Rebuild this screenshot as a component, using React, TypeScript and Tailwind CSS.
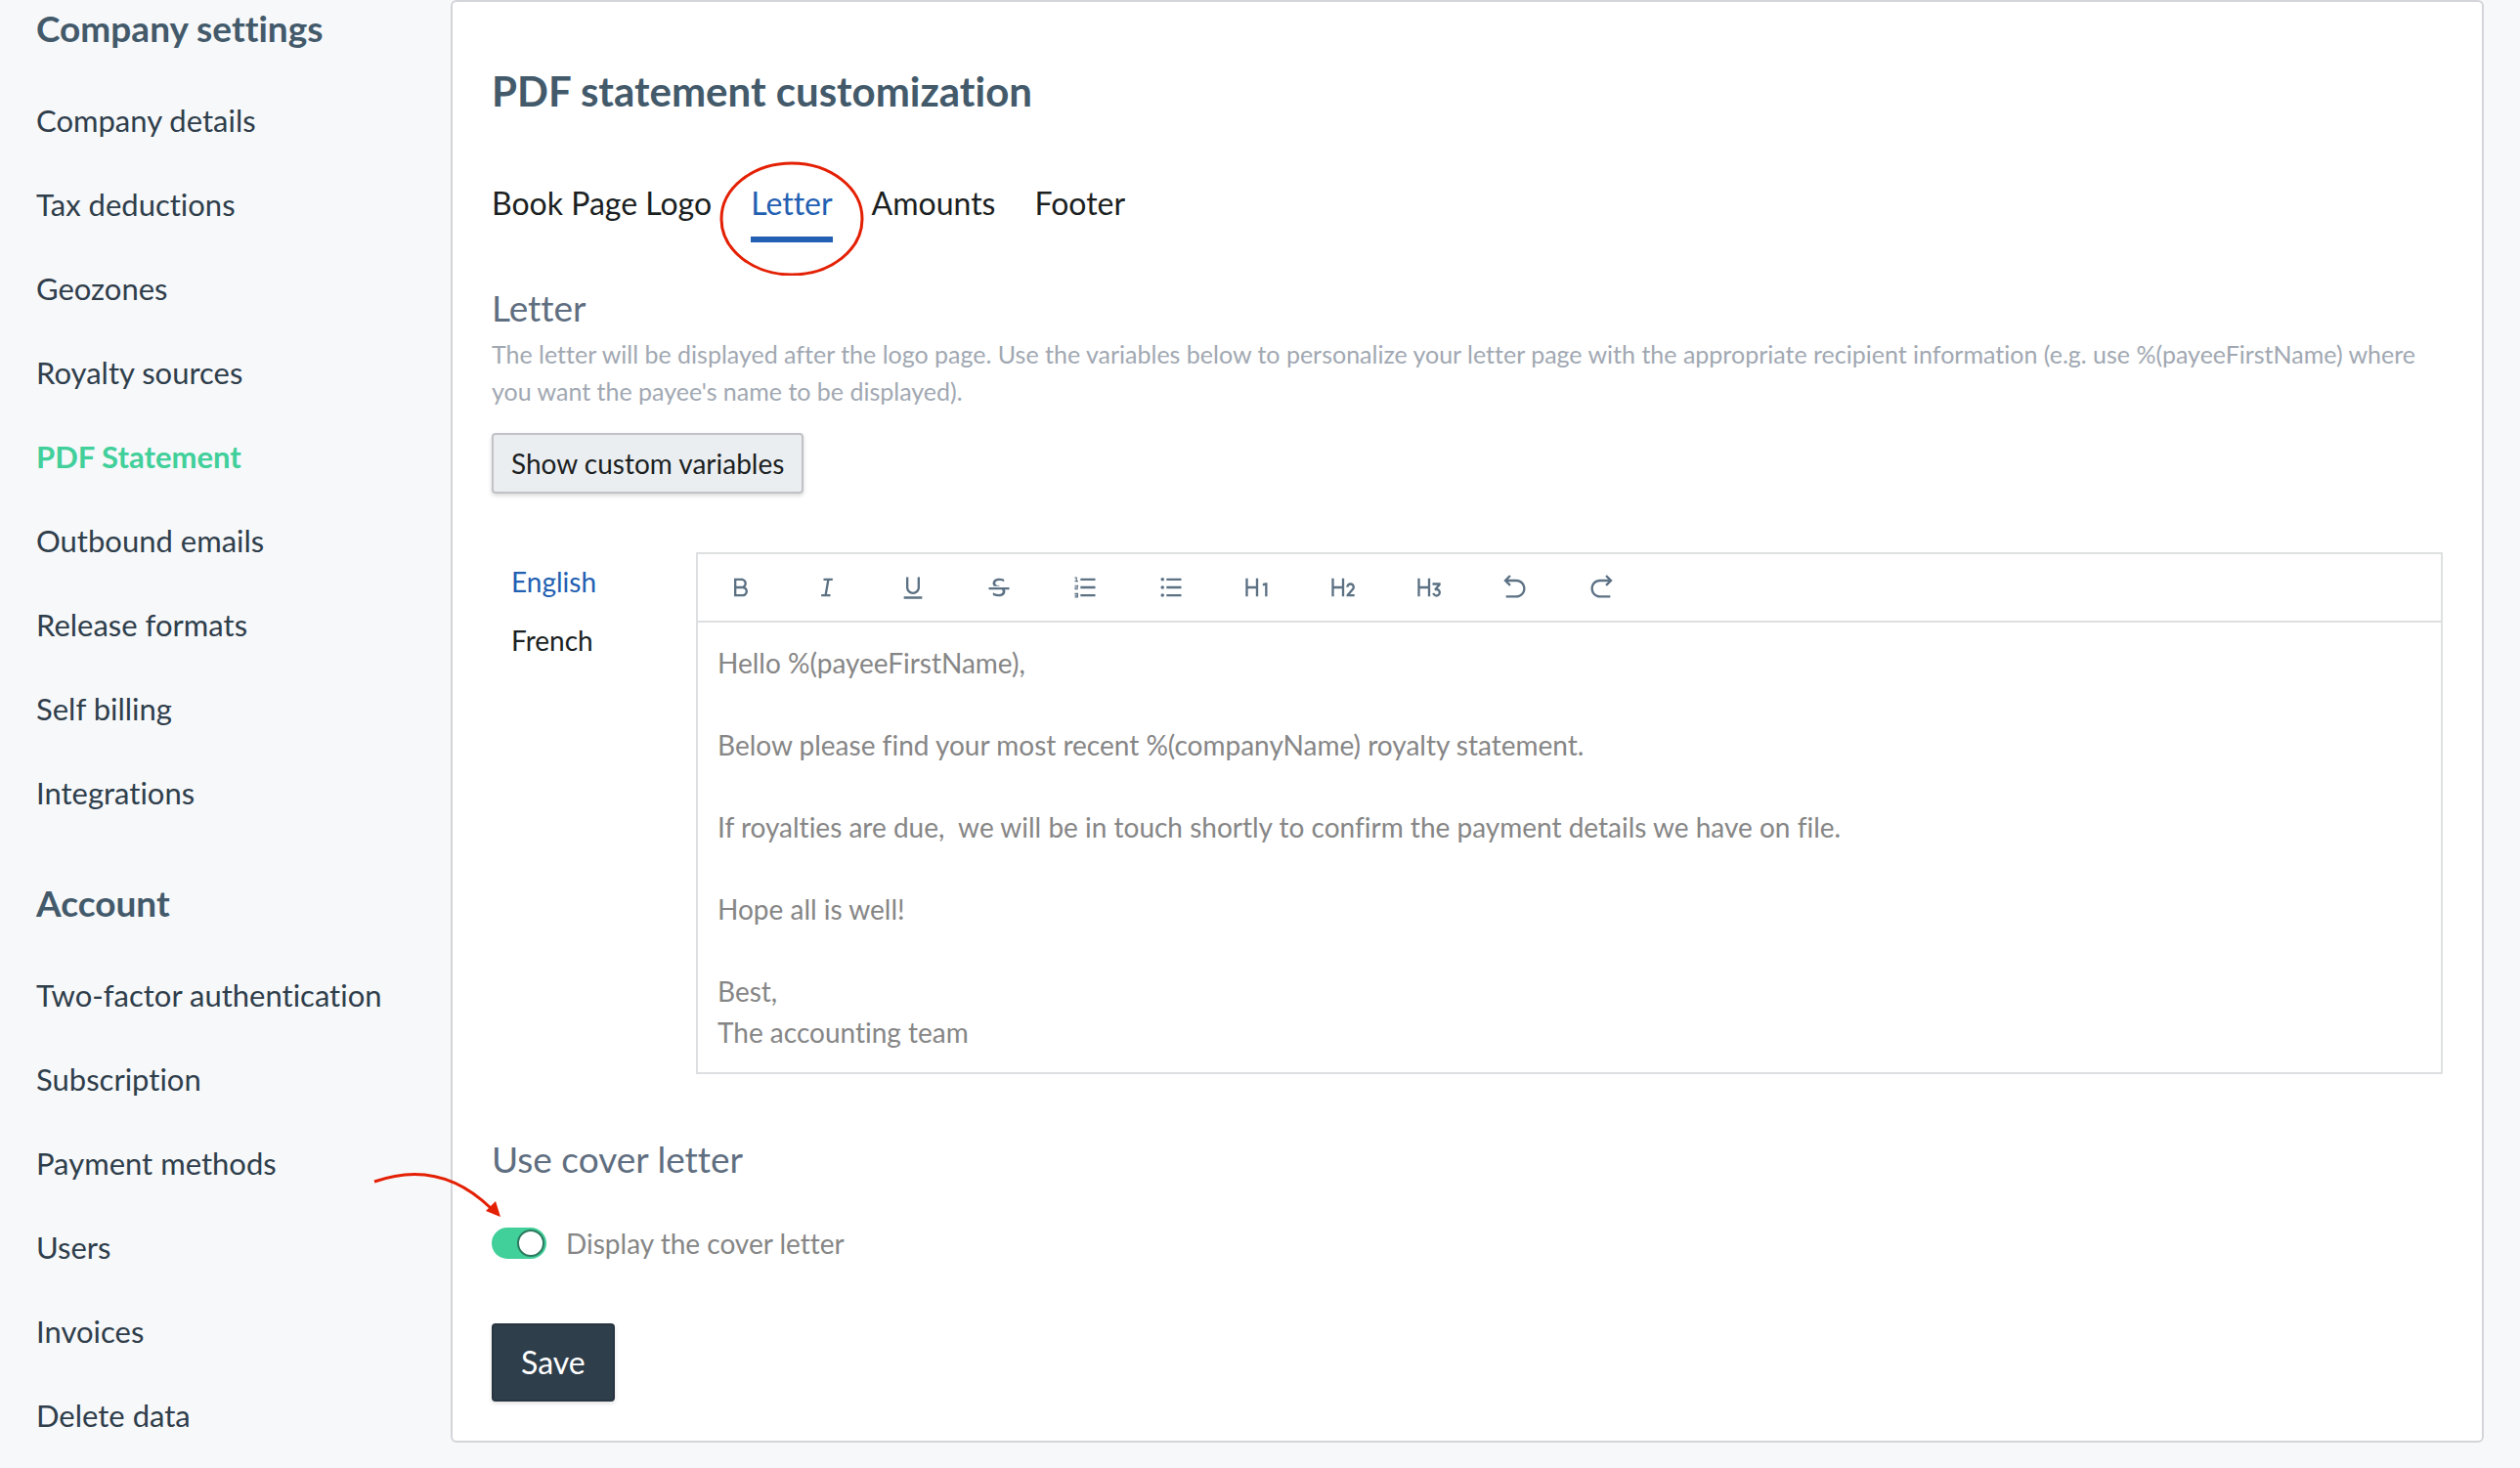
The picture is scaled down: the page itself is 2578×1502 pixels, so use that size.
import { useState } from "react";
import type { IconType } from "react-icons";
import {
  RiArrowGoBackLine,
  RiArrowGoForwardLine,
  RiBold,
  RiH1,
  RiH2,
  RiH3,
  RiItalic,
  RiListOrdered,
  RiListUnordered,
  RiStrikethrough,
  RiUnderline,
} from "react-icons/ri";

const menus = [
  {
    title: "Company settings",
    items: [
      { label: "Company details", path: "#company-details" },
      { label: "Tax deductions", path: "#tax-deductions" },
      { label: "Geozones", path: "#geozones" },
      { label: "Royalty sources", path: "#royalty-sources" },
      { label: "PDF Statement", path: "#pdf-statement", active: true },
      { label: "Outbound emails", path: "#outbound-emails" },
      { label: "Release formats", path: "#release-formats" },
      { label: "Self billing", path: "#self-billing" },
      { label: "Integrations", path: "#integrations" },
    ],
  },
  {
    title: "Account",
    items: [
      { label: "Two-factor authentication", path: "#two-factor" },
      { label: "Subscription", path: "#subscription" },
      { label: "Payment methods", path: "#payment-methods" },
      { label: "Users", path: "#users" },
      { label: "Invoices", path: "#invoices" },
      { label: "Delete data", path: "#delete-data" },
    ],
  },
];

const tabs = ["Book Page Logo", "Letter", "Amounts", "Footer"];

const languages = ["English", "French"];

const tools: { label: string; Icon: IconType }[] = [
  { label: "Bold", Icon: RiBold },
  { label: "Italic", Icon: RiItalic },
  { label: "Underline", Icon: RiUnderline },
  { label: "Strikethrough", Icon: RiStrikethrough },
  { label: "Ordered list", Icon: RiListOrdered },
  { label: "Bullet list", Icon: RiListUnordered },
  { label: "Heading 1", Icon: RiH1 },
  { label: "Heading 2", Icon: RiH2 },
  { label: "Heading 3", Icon: RiH3 },
  { label: "Undo", Icon: RiArrowGoBackLine },
  { label: "Redo", Icon: RiArrowGoForwardLine },
];

const letter = `Hello %(payeeFirstName),

Below please find your most recent %(companyName) royalty statement.

If royalties are due,  we will be in touch shortly to confirm the payment details we have on file.

Hope all is well!

Best,
The accounting team`;

const Sidebar = () => (
  <nav className="flex flex-col gap-12 pl-[37px] pt-[7px]">
    {menus.map((menu) => (
      <section key={menu.title}>
        <h2 className="mb-[29px] text-[37px] leading-[44px] font-bold text-[#435a6b]">
          {menu.title}
        </h2>
        <ul>
          {menu.items.map((item) => (
            <li key={item.path} className="text-[31px] leading-[86px]">
              <a
                href={item.path}
                className={item.active ? "font-bold text-[#41cf9a]" : "text-[#2f3e4b]"}
              >
                {item.label}
              </a>
            </li>
          ))}
        </ul>
      </section>
    ))}
  </nav>
);

const Tabs = () => {
  const [current, setCurrent] = useState("Letter");

  return (
    <div role="tablist" className="mt-16 flex items-start gap-10">
      {tabs.map((tab) => (
        <div key={tab} className="relative">
          <button
            type="button"
            role="tab"
            aria-selected={tab === current}
            onClick={() => setCurrent(tab)}
            className={
              tab === current
                ? "block cursor-pointer border-b-[6px] border-[#235fb2] pb-[10px] text-[32px] leading-[48px] text-[#235fb2]"
                : "block cursor-pointer border-b-[6px] border-transparent pb-[10px] text-[32px] leading-[48px] text-[#1b1f22]"
            }
          >
            {tab}
          </button>
          {/* hand-drawn style marker round the letter tab */}
          {tab === "Letter" && (
            <svg
              viewBox="0 0 148 118"
              className="pointer-events-none absolute -left-8 -top-5 h-[118px] w-[148px] max-w-none"
              aria-hidden="true"
            >
              <ellipse cx="74" cy="60" rx="72" ry="57" fill="none" stroke="#e42004" strokeWidth="3" />
            </svg>
          )}
        </div>
      ))}
    </div>
  );
};

const LetterEditor = () => {
  const [language, setLanguage] = useState("English");

  return (
    <div className="mt-15 grid grid-cols-[209px_1fr]">
      <div className="flex flex-col items-start">
        {languages.map((name) => (
          <button
            key={name}
            type="button"
            onClick={() => setLanguage(name)}
            className={
              name === language
                ? "cursor-pointer px-5 text-[28px] leading-[60px] text-[#235fb2]"
                : "cursor-pointer px-5 text-[28px] leading-[60px] text-[#1b1f22]"
            }
          >
            {name}
          </button>
        ))}
      </div>
      <div className="border-2 border-[#dedfe0]">
        <div className="flex border-b-2 border-[#dedfe0]">
          {tools.map(({ label, Icon }) => (
            <button
              key={label}
              type="button"
              aria-label={label}
              className="flex h-[68px] w-22 cursor-pointer items-center justify-center text-[#5c7184]"
            >
              <Icon size={28} />
            </button>
          ))}
        </div>
        <textarea
          aria-label="Letter text"
          rows={10}
          defaultValue={letter}
          spellCheck={false}
          className="block w-full resize-none p-5 text-[28px] leading-[42px] text-[#868686] outline-none"
        />
      </div>
    </div>
  );
};

const App = () => {
  return (
    <div className="grid min-h-screen grid-cols-[461px_1fr] items-start bg-[#f7f8fa] pr-[37px] font-['Lato',sans-serif] [font-variant-ligatures:none]">
      <Sidebar />

      <main className="rounded-md border-2 border-[#d4d5d9] bg-white px-10 pb-10 pt-16">
        <h1 className="text-[42px] leading-[54px] font-bold text-[#435a6b]">
          PDF statement customization
        </h1>

        <Tabs />

        <h2 className="mt-11 text-[37px] leading-[46px] text-[#5f6e80]">Letter</h2>
        <p className="mt-[5px] text-[25px] leading-[38px] text-[#a1a8b2]">
          The letter will be displayed after the logo page. Use the variables below to personalize
          your letter page with the appropriate recipient information (e.g. use %(payeeFirstName)
          where you want the payee's name to be displayed).
        </p>
        <button
          type="button"
          className="mt-6 block cursor-pointer rounded-sm border-2 border-[#c1c2c7] bg-[#ebeef1] px-[18px] text-[28px] leading-[58px] text-[#1b1f22] shadow-[0_2px_4px_rgba(0,0,0,0.16)]"
        >
          Show custom variables
        </button>

        <LetterEditor />

        <h2 className="mt-16 text-[37px] leading-[46px] text-[#5f6e80]">Use cover letter</h2>
        <div className="relative mt-[42px] flex items-center gap-5">
          <input
            id="cover-letter"
            type="checkbox"
            role="switch"
            defaultChecked
            className="flex h-8 w-14 cursor-pointer appearance-none items-center rounded-full bg-gray-300 px-0.5 before:size-7 before:rounded-full before:border-2 before:border-gray-500 before:bg-white checked:justify-end checked:bg-[#41cf9a] checked:before:border-[#2b7a5e]"
          />
          <label htmlFor="cover-letter" className="text-[28px] leading-[42px] text-[#868686]">
            Display the cover letter
          </label>
          {/* arrow that points at the switch */}
          <svg
            viewBox="0 0 136 54"
            className="pointer-events-none absolute -left-[123px] -top-[57px] h-[54px] w-[136px] max-w-none"
            aria-hidden="true"
          >
            <path d="M3 15C45 0 85 6 122 42" fill="none" stroke="#e42004" strokeWidth="3" />
            <path d="M132 51L127 35L117 45Z" fill="#e42004" />
          </svg>
        </div>

        <button
          type="button"
          className="mt-[61px] block cursor-pointer rounded-sm border-2 border-[#283541] bg-[#2f3e4b] px-7 text-[32px] leading-[76px] text-white shadow-[0_2px_4px_rgba(0,0,0,0.12)]"
        >
          Save
        </button>
      </main>
    </div>
  );
};

export default App;
